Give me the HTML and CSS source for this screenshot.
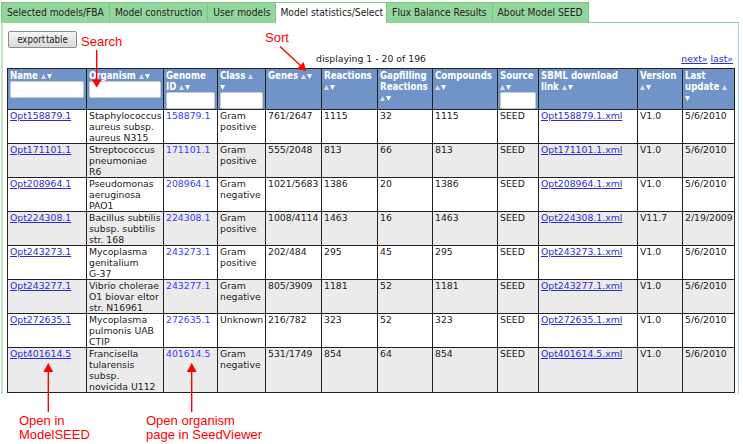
FILE: index.html
```html
<!DOCTYPE html>
<html>
<head>
<meta charset="utf-8">
<link rel="stylesheet" href="styles.css">
</head>
<body>
<div class="tabs">
  <div class="tab">Selected models/FBA</div>
  <div class="tab">Model construction</div>
  <div class="tab">User models</div>
  <div class="tab active">Model statistics/Select</div>
  <div class="tab">Flux Balance Results</div>
  <div class="tab">About Model SEED</div>
</div>
<div class="panel">
  <button class="export">export table</button>
  <div class="pager">
    <span></span>
    <span class="count">displaying 1 - 20 of 196</span>
    <span class="nav"><a href="#">next»</a> <a href="#">last»</a></span>
  </div>
  <table>
    <colgroup>
      <col style="width:79px"><col style="width:77px"><col style="width:54px"><col style="width:48px">
      <col style="width:56px"><col style="width:56px"><col style="width:55px"><col style="width:65px">
      <col style="width:41px"><col style="width:99px"><col style="width:45px"><col style="width:52px">
    </colgroup>
    <thead>
      <tr>
        <th>Name <svg class="srt" width="11" height="5" viewBox="0 0 11 5"><path class="up" d="M0 5 2.5 0 5 5Z"/><path class="dn" d="M6 0h5L8.5 5Z"/></svg><input class="flt"></th>
        <th>Organism <svg class="srt" width="11" height="5" viewBox="0 0 11 5"><path class="up" d="M0 5 2.5 0 5 5Z"/><path class="dn" d="M6 0h5L8.5 5Z"/></svg><input class="flt"></th>
        <th>Genome<br>ID <svg class="srt" width="11" height="5" viewBox="0 0 11 5"><path class="up" d="M0 5 2.5 0 5 5Z"/><path class="dn" d="M6 0h5L8.5 5Z"/></svg><input class="flt"></th>
        <th>Class <svg class="srt" width="5" height="5" viewBox="0 0 5 5"><path class="up" d="M0 5 2.5 0 5 5Z"/></svg><br><svg class="srt" width="5" height="5" viewBox="0 0 5 5"><path class="dn" d="M0 0h5L2.5 5Z"/></svg><input class="flt"></th>
        <th>Genes <svg class="srt" width="11" height="5" viewBox="0 0 11 5"><path class="up" d="M0 5 2.5 0 5 5Z"/><path class="dn" d="M6 0h5L8.5 5Z"/></svg></th>
        <th>Reactions<br><svg class="srt" width="11" height="5" viewBox="0 0 11 5"><path class="up" d="M0 5 2.5 0 5 5Z"/><path class="dn" d="M6 0h5L8.5 5Z"/></svg></th>
        <th>Gapfilling<br>Reactions<br><svg class="srt" width="11" height="5" viewBox="0 0 11 5"><path class="up" d="M0 5 2.5 0 5 5Z"/><path class="dn" d="M6 0h5L8.5 5Z"/></svg></th>
        <th>Compounds<br><svg class="srt" width="11" height="5" viewBox="0 0 11 5"><path class="up" d="M0 5 2.5 0 5 5Z"/><path class="dn" d="M6 0h5L8.5 5Z"/></svg></th>
        <th>Source<br><svg class="srt" width="11" height="5" viewBox="0 0 11 5"><path class="up" d="M0 5 2.5 0 5 5Z"/><path class="dn" d="M6 0h5L8.5 5Z"/></svg><input class="flt"></th>
        <th>SBML download<br>link <svg class="srt" width="11" height="5" viewBox="0 0 11 5"><path class="up" d="M0 5 2.5 0 5 5Z"/><path class="dn" d="M6 0h5L8.5 5Z"/></svg></th>
        <th>Version<br><svg class="srt" width="11" height="5" viewBox="0 0 11 5"><path class="up" d="M0 5 2.5 0 5 5Z"/><path class="dn" d="M6 0h5L8.5 5Z"/></svg></th>
        <th>Last<br>update <svg class="srt" width="5" height="5" viewBox="0 0 5 5"><path class="up" d="M0 5 2.5 0 5 5Z"/></svg><br><svg class="srt" width="5" height="5" viewBox="0 0 5 5"><path class="dn" d="M0 0h5L2.5 5Z"/></svg></th>
      </tr>
    </thead>
    <tbody>
      <tr>
        <td><a class="m" href="#">Opt158879.1</a></td><td>Staphylococcus<br>aureus subsp.<br>aureus N315</td><td><a class="g" href="#">158879.1</a></td><td>Gram<br>positive</td><td>761/2647</td><td>1115</td><td>32</td><td>1115</td><td>SEED</td><td><a class="m" href="#">Opt158879.1.xml</a></td><td>V1.0</td><td>5/6/2010</td>
      </tr>
      <tr class="alt">
        <td><a class="m" href="#">Opt171101.1</a></td><td>Streptococcus<br>pneumoniae<br>R6</td><td><a class="g" href="#">171101.1</a></td><td>Gram<br>positive</td><td>555/2048</td><td>813</td><td>66</td><td>813</td><td>SEED</td><td><a class="m" href="#">Opt171101.1.xml</a></td><td>V1.0</td><td>5/6/2010</td>
      </tr>
      <tr>
        <td><a class="m" href="#">Opt208964.1</a></td><td>Pseudomonas<br>aeruginosa<br>PAO1</td><td><a class="g" href="#">208964.1</a></td><td>Gram<br>negative</td><td>1021/5683</td><td>1386</td><td>20</td><td>1386</td><td>SEED</td><td><a class="m" href="#">Opt208964.1.xml</a></td><td>V1.0</td><td>5/6/2010</td>
      </tr>
      <tr class="alt">
        <td><a class="m" href="#">Opt224308.1</a></td><td>Bacillus subtilis<br>subsp. subtilis<br>str. 168</td><td><a class="g" href="#">224308.1</a></td><td>Gram<br>positive</td><td>1008/4114</td><td>1463</td><td>16</td><td>1463</td><td>SEED</td><td><a class="m" href="#">Opt224308.1.xml</a></td><td>V11.7</td><td>2/19/2009</td>
      </tr>
      <tr>
        <td><a class="m" href="#">Opt243273.1</a></td><td>Mycoplasma<br>genitalium<br>G-37</td><td><a class="g" href="#">243273.1</a></td><td>Gram<br>positive</td><td>202/484</td><td>295</td><td>45</td><td>295</td><td>SEED</td><td><a class="m" href="#">Opt243273.1.xml</a></td><td>V1.0</td><td>5/6/2010</td>
      </tr>
      <tr class="alt">
        <td><a class="m" href="#">Opt243277.1</a></td><td>Vibrio cholerae<br>O1 biovar eltor<br>str. N16961</td><td><a class="g" href="#">243277.1</a></td><td>Gram<br>negative</td><td>805/3909</td><td>1181</td><td>52</td><td>1181</td><td>SEED</td><td><a class="m" href="#">Opt243277.1.xml</a></td><td>V1.0</td><td>5/6/2010</td>
      </tr>
      <tr>
        <td><a class="m" href="#">Opt272635.1</a></td><td>Mycoplasma<br>pulmonis UAB<br>CTIP</td><td><a class="g" href="#">272635.1</a></td><td>Unknown</td><td>216/782</td><td>323</td><td>52</td><td>323</td><td>SEED</td><td><a class="m" href="#">Opt272635.1.xml</a></td><td>V1.0</td><td>5/6/2010</td>
      </tr>
      <tr class="alt">
        <td><a class="m" href="#">Opt401614.5</a></td><td>Francisella<br>tularensis<br>subsp.<br>novicida U112</td><td><a class="g" href="#">401614.5</a></td><td>Gram<br>negative</td><td>531/1749</td><td>854</td><td>64</td><td>854</td><td>SEED</td><td><a class="m" href="#">Opt401614.5.xml</a></td><td>V1.0</td><td>5/6/2010</td>
      </tr>
    </tbody>
  </table>
</div>

<svg class="arrows" width="743" height="444" viewBox="0 0 743 444">
  <g stroke="#f00" stroke-width="1.4" fill="none">
    <line x1="96.7" y1="50" x2="96.7" y2="81"/>
    <line x1="280" y1="46.5" x2="301" y2="66"/>
    <line x1="48.3" y1="370" x2="48.3" y2="412"/>
    <line x1="191.7" y1="370" x2="191.7" y2="412"/>
  </g>
  <g fill="#f00">
    <path d="M91.7 79.5 101.7 79.5 96.7 87.5Z"/>
    <path d="M306 71 296.8 69.1 303.7 61.9Z"/>
    <path d="M48.3 363 43.3 372 53.3 372Z"/>
    <path d="M191.7 363 186.7 372 196.7 372Z"/>
  </g>
</svg>
<div class="note n-search">Search</div>
<div class="note n-sort">Sort</div>
<div class="note n-open">Open in<br>ModelSEED</div>
<div class="note n-org">Open organism<br>page in SeedViewer</div>
</body>
</html>
```

FILE: styles.css
```css
* { box-sizing: border-box; }
html, body { margin: 0; padding: 0; background: #fff; }
body {
  position: relative;
  width: 743px;
  height: 444px;
  overflow: hidden;
  font-family: "DejaVu Sans", Verdana, sans-serif;
  font-size: 9.3px;
  color: #222;
}

/* tabs */
.tabs {
  display: flex;
  margin: 2px 0 0 1px;
  height: 20px;
}
.tab {
  font-family: "DejaVu Sans Condensed", "DejaVu Sans", sans-serif;
  font-stretch: condensed;
  font-size: 10.2px;
  line-height: 19px;
  padding: 0 5px 0 5px;
  background: #92d69b;
  border-top: 1px solid #7cc487;
  border-right: 1px solid #7cc487;
  color: #222;
  white-space: nowrap;
}
.tab:first-child { border-left: 1px solid #7cc487; }
.tab.active {
  background: #fff;
  height: 21px;
  padding: 0 3px 0 4px;
  position: relative;
  z-index: 1;
}

/* panel */
.panel {
  margin-left: 1px;
  width: 738px;
  border-top: 1px solid #8fcf98;
  border-right: 1px solid #a9dbaf;
  border-left: 2px solid #bfe3c3;
  padding: 8px 3px 1px 4px;
}
.export {
  display: block;
  margin: 0 0 0 1px;
  width: 69px;
  height: 17px;
  padding: 0;
  font-family: "DejaVu Sans Condensed", "DejaVu Sans", sans-serif;
  font-stretch: condensed;
  font-size: 9.6px;
  word-spacing: -2px;
  color: #222;
  background: linear-gradient(#f6f6f6, #d9d9d9);
  border: 1px solid #8c8c8c;
  border-radius: 2px;
}
.pager {
  display: grid;
  grid-template-columns: 1fr auto 1fr;
  margin-top: 4px;
  height: 14px;
  line-height: 14px;
}
.count { color: #222; }
.nav { justify-self: end; padding-right: 2px; }
.nav a { color: #2b2bd9; text-decoration: underline; }

/* table */
table {
  border-collapse: collapse;
  table-layout: fixed;
  width: 727px;
  margin-top: 2px;
}
th, td {
  border: 1px solid #222;
  vertical-align: top;
  text-align: left;
  white-space: nowrap;
  overflow: hidden;
}
th {
  background: #7194c8;
  color: #fff;
  font-family: "DejaVu Sans Condensed", "DejaVu Sans", sans-serif;
  font-stretch: condensed;
  font-weight: bold;
  font-size: 9.6px;
  line-height: 11px;
  padding: 1px 2px 0;
}
td {
  line-height: 11px;
  padding: 0 2px;
}
tr.alt td { background: #ebebeb; }
.srt { vertical-align: 0; }
.srt .up { fill: #d9e0ec; }
.srt .dn { fill: #fff; }
.flt {
  display: block;
  width: 100%;
  height: 17px;
  margin: 0;
  padding: 0;
  background: #fff;
  border: 1px solid #c9ccd2;
  border-radius: 2px;
}
a.m { color: #2b2bd9; text-decoration: underline; }
a.g { color: #3a3aff; text-decoration: none; }

/* annotations overlay */
.arrows {
  position: absolute;
  left: 0;
  top: 0;
  pointer-events: none;
}
.note {
  position: absolute;
  color: #f00;
  font-family: "Liberation Sans", Arial, sans-serif;
  font-size: 13px;
  line-height: 14px;
  white-space: nowrap;
}
.n-search { left: 81px; top: 35px; }
.n-sort { left: 265px; top: 31px; }
.n-open { left: 19px; top: 414px; }
.n-org { left: 146px; top: 414px; }
```
